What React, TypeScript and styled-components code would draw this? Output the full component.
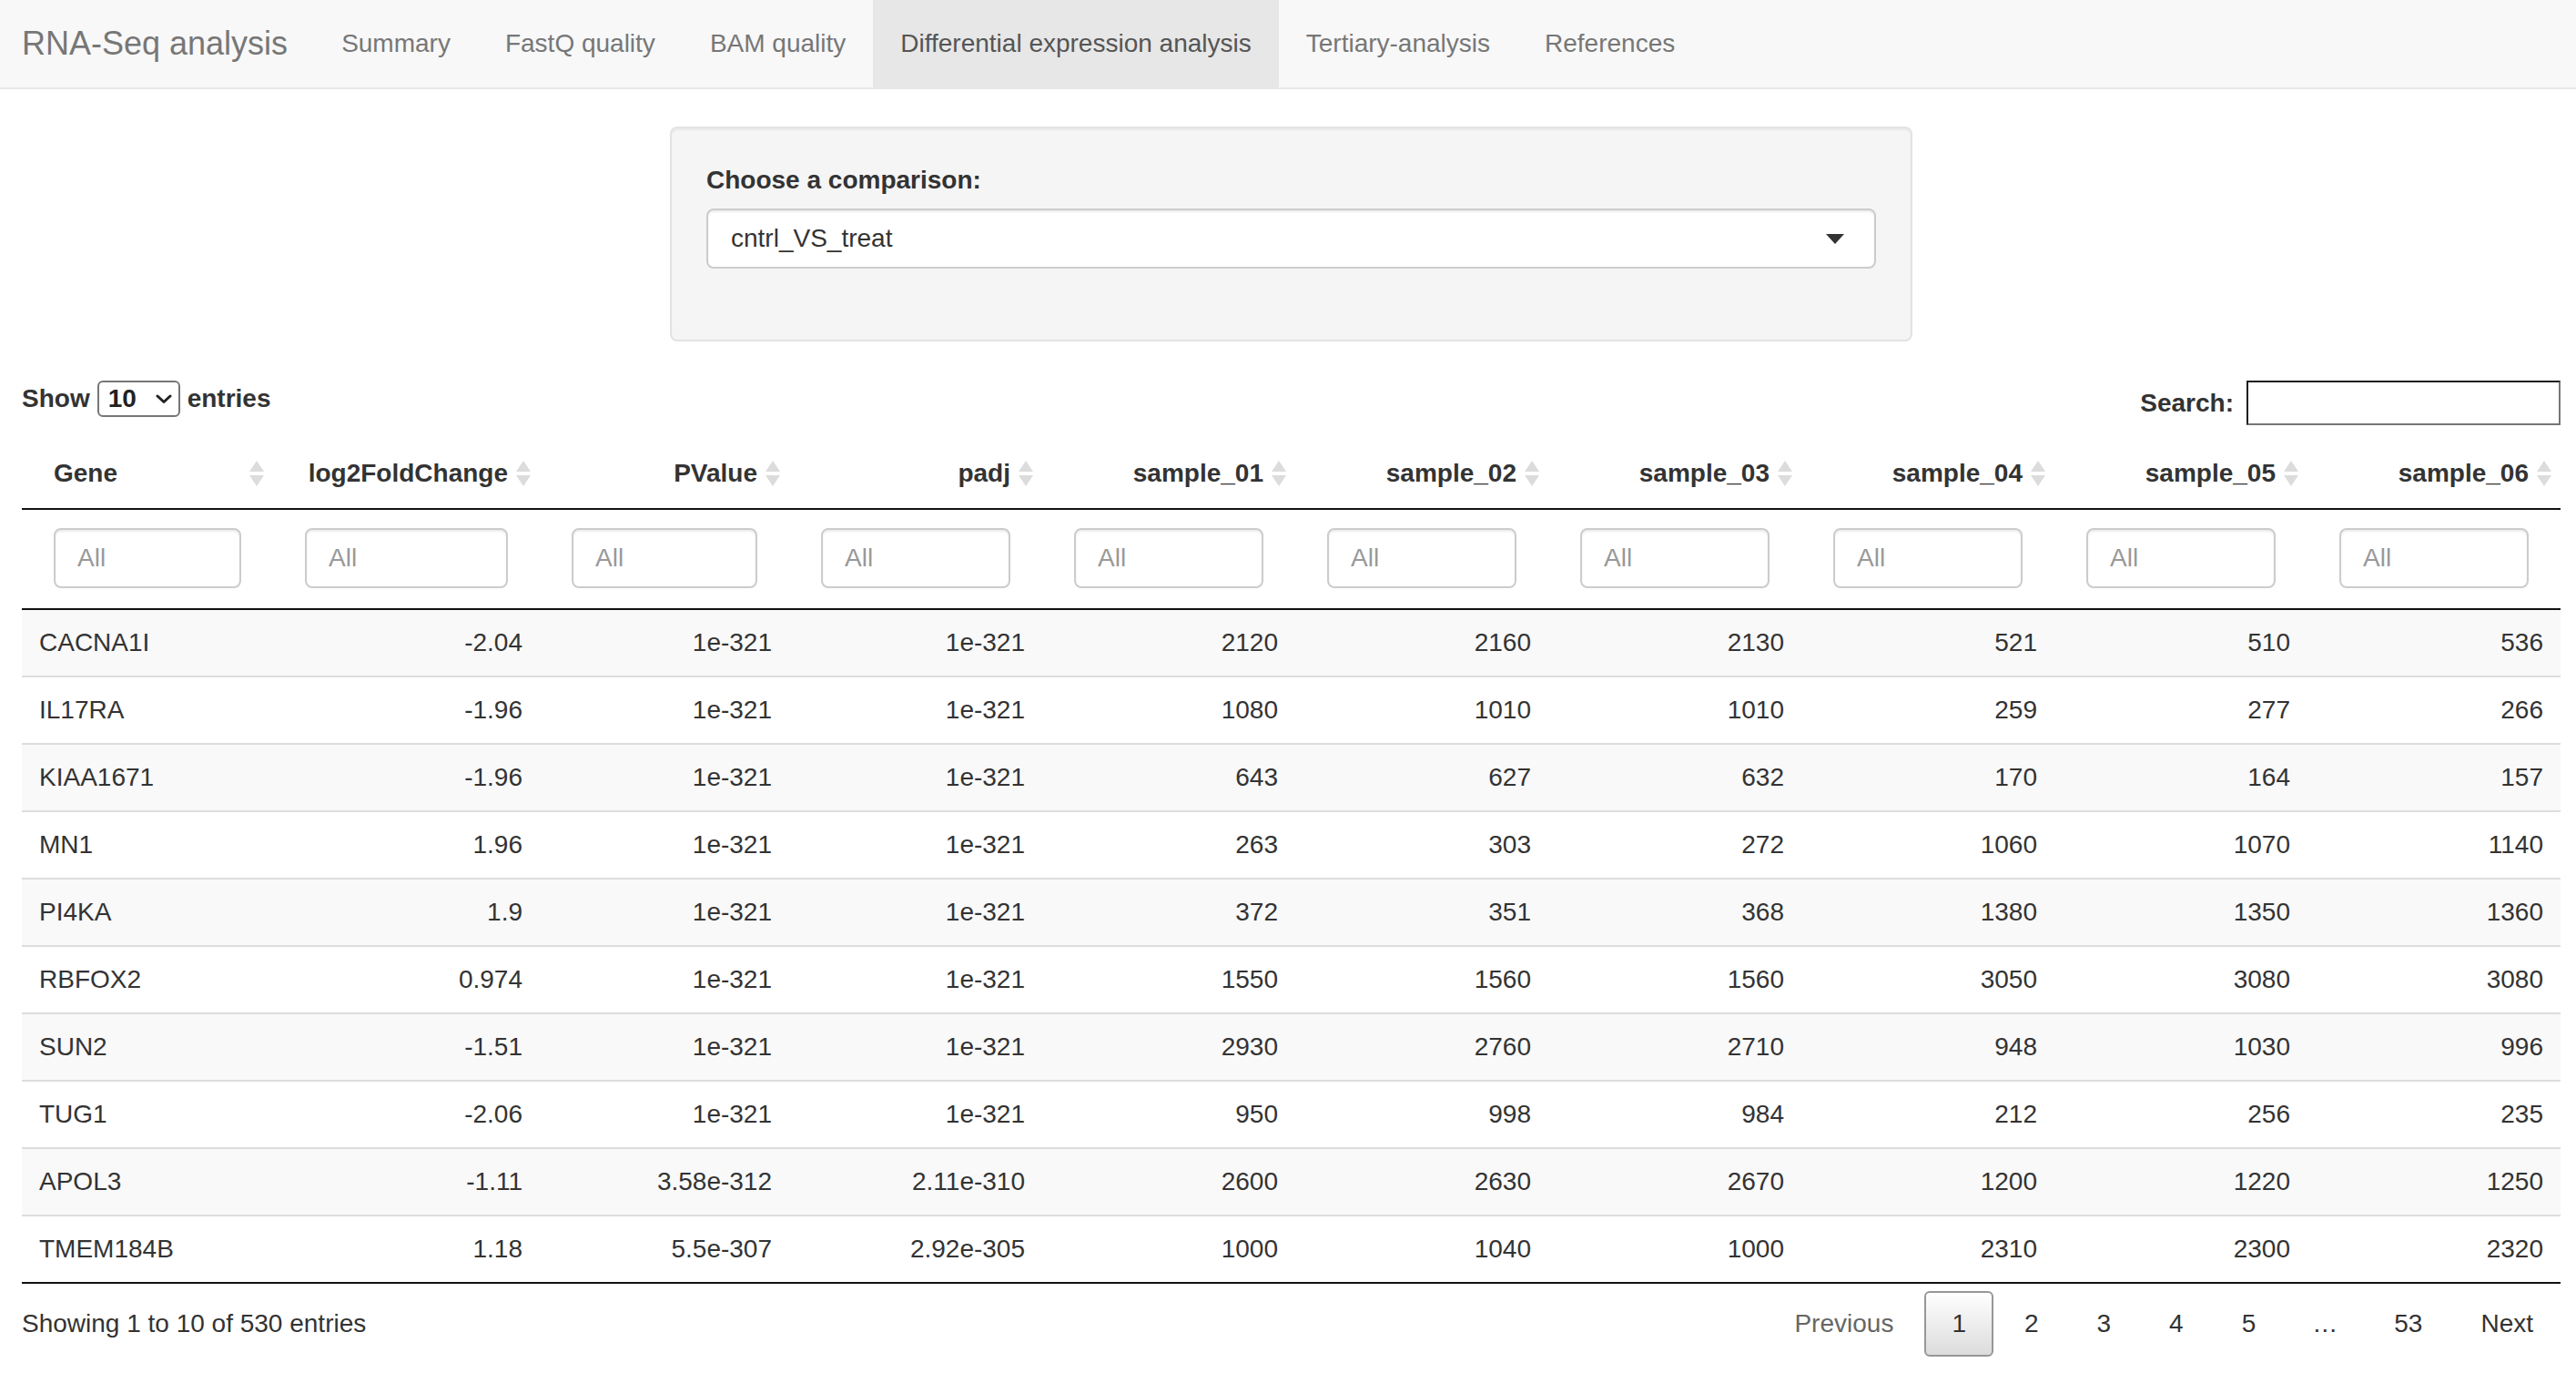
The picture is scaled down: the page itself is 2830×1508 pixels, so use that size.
import React from "react";
import styled, { createGlobalStyle } from "styled-components";

const GlobalStyle = createGlobalStyle`
  html, body { margin: 0; padding: 0; background: #fff; }
  body {
    font-family: "Liberation Sans", Arial, Helvetica, sans-serif;
    font-size: 28px;
    line-height: 38px;
    color: #333;
  }
  * { box-sizing: border-box; }
`;

const Navbar = styled.nav`
  display: flex;
  align-items: stretch;
  height: 98px;
  background: #f8f8f8;
  border-bottom: 2px solid #e7e7e7;
`;

const Brand = styled.a`
  display: flex;
  align-items: center;
  padding: 0 29px 0 24px;
  font-size: 36px;
  color: #777;
  text-decoration: none;
`;

const NavList = styled.ul`
  display: flex;
  list-style: none;
  margin: 0;
  padding: 0;
`;

const NavItem = styled.li<{ $active?: boolean }>`
  display: flex;
  align-items: center;
  padding: 0 30px;
  font-size: 28px;
  color: ${(p) => (p.$active ? "#555" : "#777")};
  background: ${(p) => (p.$active ? "#e7e7e7" : "transparent")};
`;

const Main = styled.main`
  padding: 0 17px 0 24px;
`;

const WellRow = styled.div`
  display: flex;
  justify-content: center;
  margin-top: 41px;
`;

const Well = styled.div`
  width: 1365px;
  height: 236px;
  padding: 38px 38px 0;
  background: #f5f5f5;
  border: 2px solid #e3e3e3;
  border-radius: 8px;
  box-shadow: inset 0 2px 2px rgba(0, 0, 0, 0.05);
`;

const FieldLabel = styled.label`
  display: block;
  font-weight: bold;
  margin-bottom: 12px;
`;

const SelectBox = styled.div`
  display: flex;
  align-items: center;
  justify-content: space-between;
  height: 66px;
  padding: 0 33px 0 25px;
  background: #fff;
  border: 2px solid #ccc;
  border-radius: 8px;
  box-shadow: inset 0 2px 2px rgba(0, 0, 0, 0.075);
  color: #333;
`;

const Toolbar = styled.div`
  display: flex;
  justify-content: space-between;
  align-items: flex-start;
  margin-top: 43px;
`;

const LengthLabel = styled.label`
  display: flex;
  align-items: center;
  gap: 8px;
  height: 40px;
  font-weight: bold;
`;

const LengthSelect = styled.div`
  display: flex;
  align-items: center;
  justify-content: space-between;
  width: 91px;
  height: 40px;
  padding: 0 7px 0 10px;
  border: 2px solid #767676;
  border-radius: 6px;
  font-weight: bold;
  color: #222;
`;

const SearchLabel = styled.label`
  display: flex;
  align-items: center;
  gap: 14px;
  height: 49px;
  font-weight: bold;
`;

const SearchInput = styled.input`
  width: 345px;
  height: 49px;
  border: 2px solid;
  border-color: #1e1e1e #767676 #767676 #1e1e1e;
  background: #fff;
  font: inherit;
  outline: none;
`;

const Table = styled.table`
  width: 100%;
  margin-top: 15px;
  table-layout: fixed;
  border-collapse: separate;
  border-spacing: 0;
  border-bottom: 2px solid #111;
`;

const HeadCell = styled.th<{ $align: "left" | "right" }>`
  position: relative;
  padding: 19px 35px;
  font-weight: bold;
  line-height: 38px;
  text-align: ${(p) => p.$align};
  white-space: nowrap;
  border-bottom: 2px solid #111;
  color: #333;
`;

const SortIcon = styled.span`
  position: absolute;
  right: 9px;
  top: 50%;
  transform: translateY(-50%);
  display: flex;
`;

const FilterCell = styled.td`
  padding: 20px 35px 22px;
  border-bottom: 2px solid #111;
  vertical-align: top;
`;

const FilterInput = styled.input`
  display: block;
  width: 100%;
  height: 66px;
  padding: 0 24px;
  border: 2px solid #ccc;
  border-radius: 8px;
  background: #fff;
  box-shadow: inset 0 2px 2px rgba(0, 0, 0, 0.075);
  font: inherit;
  color: #555;
  outline: none;
  &::placeholder { color: #999; }
`;

const BodyRow = styled.tr<{ $striped: boolean }>`
  background: ${(p) => (p.$striped ? "#f9f9f9" : "#fff")};
  &:first-child td { border-top: none; }
`;

const Cell = styled.td<{ $align: "left" | "right" }>`
  padding: 17px 19px;
  line-height: 38px;
  border-top: 2px solid #ddd;
  text-align: ${(p) => p.$align};
  white-space: nowrap;
`;

const Footer = styled.div`
  display: flex;
  justify-content: space-between;
  align-items: center;
  margin-top: 8px;
`;

const Info = styled.div`
  color: #333;
`;

const Paginate = styled.div`
  display: flex;
  align-items: center;
`;

const PageButton = styled.span<{ $current?: boolean; $disabled?: boolean }>`
  display: inline-block;
  min-width: 42px;
  margin-left: 4px;
  padding: 15px 28px;
  text-align: center;
  border: 2px solid ${(p) => (p.$current ? "#979797" : "transparent")};
  border-radius: 6px;
  color: ${(p) => (p.$disabled ? "#666" : "#333")};
  background: ${(p) =>
    p.$current ? "linear-gradient(to bottom, #ffffff 0%, #dcdcdc 100%)" : "transparent"};
`;

const Ellipsis = styled.span`
  padding: 0 28px;
  margin-left: 4px;
`;

const SortBoth = () => (
  <svg width="18" height="30" viewBox="0 0 18 30">
    <polygon points="9,1 17,13 1,13" fill="#dcdcdc" />
    <polygon points="1,17 17,17 9,29" fill="#dcdcdc" />
  </svg>
);

const Caret = () => (
  <svg width="20" height="11" viewBox="0 0 20 11">
    <polygon points="0,0 20,0 10,11" fill="#333" />
  </svg>
);

const Chevron = () => (
  <svg width="18" height="11" viewBox="0 0 18 11">
    <polyline points="2,2 9,8.5 16,2" fill="none" stroke="#222" strokeWidth="3" strokeLinecap="round" strokeLinejoin="round" />
  </svg>
);

type Col = { key: string; label: string; width: number; align: "left" | "right" };

const columns: Col[] = [
  { key: "gene", label: "Gene", width: 276, align: "left" },
  { key: "l2", label: "log2FoldChange", width: 293, align: "right" },
  { key: "pv", label: "PValue", width: 274, align: "right" },
  { key: "padj", label: "padj", width: 278, align: "right" },
  { key: "s1", label: "sample_01", width: 278, align: "right" },
  { key: "s2", label: "sample_02", width: 278, align: "right" },
  { key: "s3", label: "sample_03", width: 278, align: "right" },
  { key: "s4", label: "sample_04", width: 278, align: "right" },
  { key: "s5", label: "sample_05", width: 278, align: "right" },
  { key: "s6", label: "sample_06", width: 278, align: "right" },
];

const rows: string[][] = [
  ["CACNA1I", "-2.04", "1e-321", "1e-321", "2120", "2160", "2130", "521", "510", "536"],
  ["IL17RA", "-1.96", "1e-321", "1e-321", "1080", "1010", "1010", "259", "277", "266"],
  ["KIAA1671", "-1.96", "1e-321", "1e-321", "643", "627", "632", "170", "164", "157"],
  ["MN1", "1.96", "1e-321", "1e-321", "263", "303", "272", "1060", "1070", "1140"],
  ["PI4KA", "1.9", "1e-321", "1e-321", "372", "351", "368", "1380", "1350", "1360"],
  ["RBFOX2", "0.974", "1e-321", "1e-321", "1550", "1560", "1560", "3050", "3080", "3080"],
  ["SUN2", "-1.51", "1e-321", "1e-321", "2930", "2760", "2710", "948", "1030", "996"],
  ["TUG1", "-2.06", "1e-321", "1e-321", "950", "998", "984", "212", "256", "235"],
  ["APOL3", "-1.11", "3.58e-312", "2.11e-310", "2600", "2630", "2670", "1200", "1220", "1250"],
  ["TMEM184B", "1.18", "5.5e-307", "2.92e-305", "1000", "1040", "1000", "2310", "2300", "2320"],
];

const navItems = [
  "Summary",
  "FastQ quality",
  "BAM quality",
  "Differential expression analysis",
  "Tertiary-analysis",
  "References",
];

export default function App() {
  return (
    <>
      <GlobalStyle />
      <Navbar>
        <Brand>RNA-Seq analysis</Brand>
        <NavList>
          {navItems.map((n) => (
            <NavItem key={n} $active={n === "Differential expression analysis"}>
              {n}
            </NavItem>
          ))}
        </NavList>
      </Navbar>
      <Main>
        <WellRow>
          <Well>
            <FieldLabel>Choose a comparison:</FieldLabel>
            <SelectBox>
              <span>cntrl_VS_treat</span>
              <Caret />
            </SelectBox>
          </Well>
        </WellRow>

        <Toolbar>
          <LengthLabel>
            Show
            <LengthSelect>
              <span>10</span>
              <Chevron />
            </LengthSelect>
            entries
          </LengthLabel>
          <SearchLabel>
            Search:
            <SearchInput type="search" />
          </SearchLabel>
        </Toolbar>

        <Table>
          <colgroup>
            {columns.map((c) => (
              <col key={c.key} style={{ width: c.width }} />
            ))}
          </colgroup>
          <thead>
            <tr>
              {columns.map((c) => (
                <HeadCell key={c.key} $align={c.align}>
                  {c.label}
                  <SortIcon>
                    <SortBoth />
                  </SortIcon>
                </HeadCell>
              ))}
            </tr>
            <tr>
              {columns.map((c) => (
                <FilterCell key={c.key}>
                  <FilterInput type="search" placeholder="All" />
                </FilterCell>
              ))}
            </tr>
          </thead>
          <tbody>
            {rows.map((r, i) => (
              <BodyRow key={r[0]} $striped={i % 2 === 0}>
                {r.map((v, j) => (
                  <Cell key={j} $align={columns[j].align}>
                    {v}
                  </Cell>
                ))}
              </BodyRow>
            ))}
          </tbody>
        </Table>

        <Footer>
          <Info>Showing 1 to 10 of 530 entries</Info>
          <Paginate>
            <PageButton $disabled>Previous</PageButton>
            <PageButton $current>1</PageButton>
            <PageButton>2</PageButton>
            <PageButton>3</PageButton>
            <PageButton>4</PageButton>
            <PageButton>5</PageButton>
            <Ellipsis>…</Ellipsis>
            <PageButton>53</PageButton>
            <PageButton>Next</PageButton>
          </Paginate>
        </Footer>
      </Main>
    </>
  );
}
